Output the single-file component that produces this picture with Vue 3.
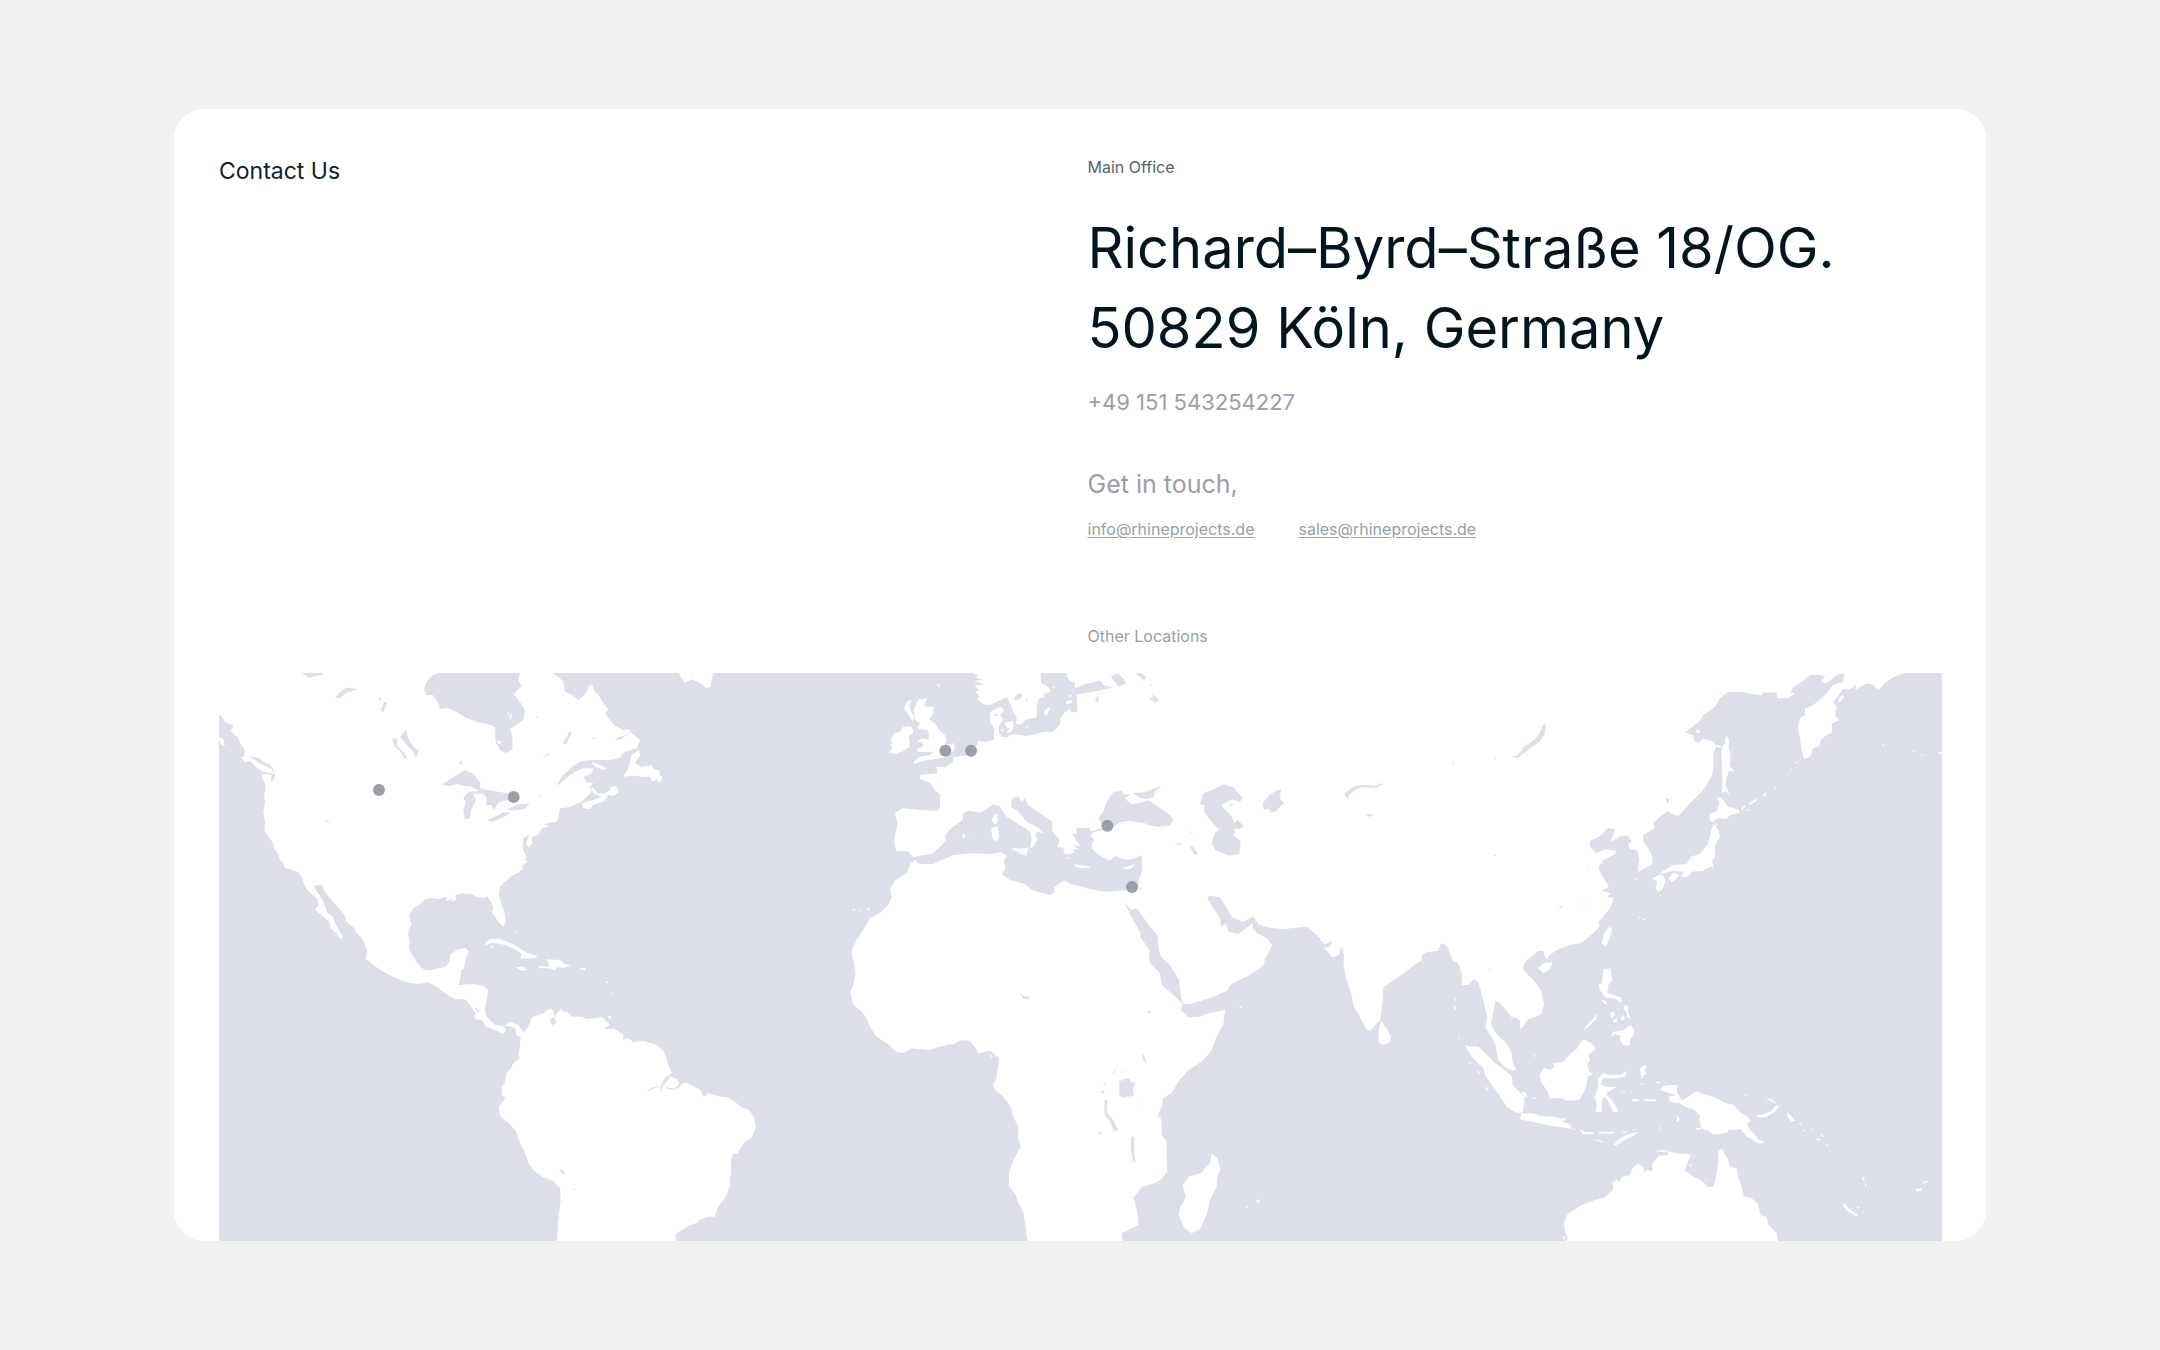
<script setup>
// Each region holds coastlines in its own local grid; x and y place it on the map.
const regions = [
  {
    id: 'north-america',
    x: -27,
    y: -39,
    land: [
      'M20 30V165L30 165 38 172 45 187 60 192 72 197 62 212 72 225 85 232 90 250 100 262 105 275 103 288 125 290 145 293 160 305 178 312 190 328 195 345 190 362 183 366 185 345 170 342 152 343 160 360 167 378 163 405 165 430 160 455 165 485 163 512 175 530 190 550 192 567 203 580 210 598 222 613 225 625 245 630 265 637 275 650 282 672 292 690 305 702 320 715 325 735 315 750 335 765 350 778 360 790 362 805 378 820 392 838 398 828 385 808 375 790 368 770 352 758 345 738 335 715 322 697 312 680 320 675 338 677 345 695 360 715 380 738 400 760 408 775 405 782 425 798 445 815 460 838 472 865 468 900H617L605 885 597 865 600 845 594 825 596 808 605 795 600 775 598 762 610 745 630 733 645 718 665 713 685 717 700 712 712 712 707 722 730 718 725 727 740 718 735 705 755 700 785 702 800 710 820 715 832 710 843 725 850 745 845 755 855 770 865 785 880 800 886 785 884 760 875 735 866 705 870 680 885 665 905 648 925 638 940 625 935 618 952 605 945 600 950 590 940 572 938 555 940 535 958 522 952 540 948 552 955 563 967 550 967 530 985 525 995 505 1020 498 1000 495 1020 488 1040 485 1045 470 1050 445 1075 442 1100 432 1115 425 1130 410 1145 395 1140 380 1150 370 1130 365 1120 352 1145 340 1150 325 1120 325 1095 335 1075 348 1060 362 1040 377 1055 350 1085 322 1115 303 1150 300 1200 300 1225 295 1245 275 1280 265 1290 240 1265 220 1255 207 1240 210 1215 197 1195 175 1185 160 1195 150 1180 130 1170 110 1152 92 1145 70 1135 85 1125 103 1105 120 1085 105 1065 95 1060 65 1045 50 1028 39V30H930V39L925 60 935 78 910 103 930 125 945 150 940 180 900 207 908 235 907 268 890 280 870 270 856 245 855 200 830 192 800 185 765 172 740 155 712 143 690 147 680 120 668 105 648 106 642 88 648 68 665 48 685 39V30Z',
    ],
    water: [
      'M273 39L300 53 335 45 340 39Z',
      'M375 112L395 92 410 83 445 87 410 98 388 115Z',
      'M504 115L515 115 511 124ZM522 125L532 128 520 157 512 150Z',
      'M547 238L560 232 563 262 580 275 591 295 584 298 572 275 555 260Z',
      'M570 232L587 209 597 240 611 260 626 272 617 295 610 275 593 257Z',
      'M745 310L755 302 760 315Z',
      'M695 374L735 348 765 330 790 342 812 370 810 382 825 388 855 394 893 400 897 420 880 422 865 430 850 452 845 435 828 435 830 412 815 400 790 403 798 420 783 450 780 475 765 478 760 450 768 425 760 415 775 396 808 393 785 380 765 378 740 372 720 378Z',
      'M832 480L860 467 880 457 905 458 880 472 845 487ZM890 448L920 435 958 430 945 448 905 452Z',
      'M345 476L360 490 350 487Z',
      'M1040 377L1060 350 1068 352 1050 370ZM998 291L1018 280 1012 288ZM1058 252L1078 215 1085 218 1068 252Z',
      'M1212 238L1262 220 1225 240ZM1147 232L1158 236 1150 238ZM985 407L995 408 988 411ZM976 168L988 172 980 173Z',
    ],
    islands: [
      'M93 292L105 306 120 303 135 318 150 330 170 338 192 342 185 328 160 315 145 308 130 295 105 288Z',
      'M27 230L42 240 44 258 30 252Z',
      'M1115 430L1120 445 1140 447 1150 435 1180 425 1195 405 1212 408 1225 397 1220 378 1205 380 1200 390 1180 402 1160 398 1150 382 1143 385 1150 400 1175 410 1150 420Z',
      'M1145 308L1165 312 1188 325 1185 330 1155 320Z',
      'M1240 350L1255 325 1265 285 1287 270 1291 285 1275 310 1295 320 1325 315 1330 327 1350 332 1348 345 1358 350 1350 368 1340 358 1328 365 1318 350 1298 350 1270 347Z',
      'M860 240L878 248 865 251ZM893 158L897 155 895 175ZM902 158L906 170 900 180Z',
      'M820 857L838 838 865 836 900 848 925 862 950 878 982 888 975 895 932 896 935 882 915 868 885 855 850 848ZM843 855L852 860 846 866ZM915 812L925 813 920 817Z',
      'M718 900L722 882 745 868 768 864 775 875 765 900Z',
    ],
  },
  {
    id: 'central-and-south-america',
    x: -27,
    y: 771,
    land: [
      'M432 0L455 25 472 60 468 85 490 105 520 125 555 143 590 157 625 162 655 157 680 170 705 190 735 207 765 208 780 225 797 250 795 268 815 270 830 290 855 300 880 312 888 298 880 290 895 288 915 295 918 315 932 322 930 345 925 375 930 383 910 400 903 415 888 432 885 460 875 470 875 497 888 503 865 530 870 558 895 578 918 603 930 640 950 680 955 700 975 725 1000 742 1030 753 1050 775 1052 810 1045 870 1040 940H1350V360L1325 342 1300 333 1270 337 1255 325 1240 330 1240 315 1215 297 1180 297 1200 285 1185 270 1175 262 1130 267 1115 260 1085 260 1070 245 1045 243 1035 260 1028 240 1020 235 1000 250 965 262 960 280 948 300 940 308 925 285 900 275 885 288 855 285 830 260 825 240 828 215 835 180 820 167 790 162 745 165 750 150 755 120 762 115 765 95 775 65 765 55 735 65 722 72 718 95 705 112 685 115 660 122 645 120 630 110 620 95 600 70 595 40 594 0Z',
    ],
    water: [
      'M1020 268L1033 260 1040 278 1030 287 1022 280Z',
      'M790 230L800 235 809 243 803 247Z',
      'M1048 718L1057 720 1068 732 1055 730ZM1090 776L1097 777 1094 782Z',
    ],
    islands: [
      'M985 108L1018 110 1015 97 1008 88 1050 90 1065 103 1083 107 1060 113 1040 112 1035 120 1015 115 988 115ZM918 112L940 110 953 119 935 123ZM1108 113L1128 114 1125 121 1110 120Z',
      'M1195 257L1203 258 1202 266 1195 264ZM1188 155H1194V159H1188ZM1192 171H1196V174H1192ZM1201 186H1205V190H1201ZM1050 236L1056 240 1050 243Z',
    ],
  },
  {
    id: 'europe',
    x: 1263,
    y: -39,
    land: [
      'M115 30V40L125 55 135 68 155 58 175 66 200 85 213 80 215 55 222 39V30Z',
      'M1000 30V42L1015 45 1008 52 1028 60 1003 62 1033 74 1005 76 1018 92 1006 93 1020 110 1012 117 1030 133 1050 135 1075 122 1100 112 1110 130 1120 155 1130 175 1128 193 1145 193 1155 180 1190 172 1190 140 1197 115 1212 112 1210 103 1230 95 1225 80 1203 70V30Z',
      'M1280 30V50L1290 65 1310 85 1350 68V30Z',
      'M1350 97L1310 100 1312 155 1290 145 1275 155 1262 175 1260 195 1240 215 1215 215 1160 228 1120 222 1100 232 1085 230 1075 215 1078 195 1090 180 1080 165 1092 152 1085 140 1060 150 1050 160 1050 185 1062 205 1062 240 1040 245 1015 243 1010 255 990 275 975 287 940 292 938 307 915 322 888 320 893 340 840 345 840 357 870 368 885 390 900 402 900 440 890 453 840 450 790 445 765 458 773 490 762 540 768 573 803 574 820 592 850 585 875 582 895 565 910 550 918 540 915 525 935 503 968 480 970 460 985 452 1020 458 1045 443 1060 433 1080 440 1100 470 1140 495 1170 515 1175 535 1170 565 1180 560 1192 540 1185 520 1195 515 1210 522 1195 503 1160 485 1135 455 1113 440 1117 415 1135 408 1145 425 1155 415 1165 435 1195 457 1237 485 1237 512 1255 535 1270 560 1275 582 1305 578 1300 503 1350 503Z',
      'M640 900L635 880 650 840 670 810 690 775 720 758 745 735 755 710 750 690 765 660 800 640 812 610 825 600 840 612 880 612 905 600 940 585 1000 580 1050 582 1085 577 1100 588 1090 605 1097 625 1085 642 1110 660 1150 670 1180 692 1232 706 1245 695 1242 683 1270 662 1305 672 1350 685V900Z',
    ],
    water: [
      'M1122 115L1130 105 1138 98 1148 104 1143 115 1125 122ZM1157 122L1163 115 1160 130Z',
      'M1055 165L1075 160 1072 168Z',
    ],
    islands: [
      'M821 150L835 118 862 115 852 138 882 142 878 165 868 178 885 190 895 208 915 225 920 240 915 255 943 250 944 268 930 282 918 292 885 297 850 302 822 312 820 305 840 290 870 285 880 275 835 276 830 268 850 258 848 248 833 245 845 235 865 238 868 225 862 210 838 208 832 202 840 190 825 180Z',
      'M747 278L758 262 750 255 760 248 750 240 765 220 780 215 790 200 812 198 822 215 806 228 810 260 790 272 765 283Z',
      'M793 148L800 125 815 118 808 135 812 152 822 170 818 185 806 165Z',
      'M892 75L897 70 899 84Z',
      'M1092 188L1118 182 1122 195 1115 215 1100 218 1110 205 1100 203ZM1080 207L1092 210 1088 215ZM1157 198L1167 202 1160 205Z',
      'M1213 155L1225 140 1230 145 1222 163 1215 165ZM1278 123L1298 120 1295 130 1280 132ZM1285 107L1296 105 1292 113ZM1236 80L1246 79 1243 85Z',
      'M1062 465L1070 460 1073 480 1067 495 1055 482ZM1054 505L1072 498 1077 515 1075 540 1063 543 1056 530Z',
      'M1118 563L1140 566 1165 562 1160 587 1145 582 1120 570ZM966 520L978 527 970 536ZM996 521L1001 521 999 525ZM935 534L940 534 937 538Z',
      'M1237 490L1240 515 1258 540 1252 560 1270 565 1275 583 1290 582 1303 578 1303 568 1318 570 1298 553 1322 560 1308 540 1296 522 1312 520 1306 505 1290 495Z',
      'M1303 613L1345 618 1350 623 1325 625 1303 618ZM1283 592H1288V596H1283Z',
      'M637 749L646 746 642 754ZM657 752L662 752 660 758ZM681 750L690 740 686 752Z',
    ],
  },
  {
    id: 'atlantic',
    x: 1263,
    y: 771,
    land: [
      'M-30 940H107V912L145 887 175 877 175 870 205 860 225 860 232 835 260 795 270 765 270 740 274 730 272 690 280 672 292 672 310 640 335 622 347 595 342 560 325 538 305 533 285 515 260 502 240 500 205 490 190 500 180 480 150 462 130 458 115 475 100 480 80 476 84 460 102 443 82 438 95 430 85 405 78 380 70 362 45 343 10 333 -30 338Z',
      'M668 0L635 60 642 80 642 100 647 130 640 165 630 185 640 225 665 245 680 265 690 290 710 320 740 340 770 365 790 370 815 355 865 360 900 350 930 343 940 343 965 330 990 333 1005 352 1015 370 1050 362 1077 385 1070 440 1060 465 1065 480 1090 500 1112 530 1120 560 1135 590 1133 625 1142 650 1120 690 1107 730 1107 768 1127 795 1133 815 1150 845 1155 880 1163 940H1350V0Z',
    ],
    water: [
      'M60 470L78 438 90 443 75 460 66 470 65 487ZM20 486L35 473 62 467 38 477Z',
      'M1140 190L1152 199 1170 202 1168 206 1150 206Z',
      'M920 338L932 345 930 350Z',
    ],
    islands: ['M80 460L96 445 112 448 118 462 103 476 84 473Z', 'M1050 378L1055 374 1057 383Z'],
  },
  {
    id: 'middle-east',
    x: 2553,
    y: -39,
    land: [],
    water: [
      'M-5 60L14 68 15 85 45 72 90 62 100 75 130 83 95 90 60 97 20 103 22 155 5 157 -2 145V100Z',
      'M122 50L140 40 160 55 169 70 145 80ZM197 40L215 39 228 50 222 62ZM75 118L82 108 88 120 82 128ZM237 115L250 112 246 102 268 120 257 128ZM236 73L246 74 243 78Z',
      'M-10 503L20 512 20 503 58 503 62 515 78 510 98 505 95 512 72 515 62 524 72 540 65 555 75 575 95 590 120 602 135 588 170 600 195 595 215 585 217 630 207 660 203 690 170 690 110 695 70 690 35 680 -5 670Z',
      'M85 475L100 455 110 425 130 397 155 392 160 403 185 402 163 413 182 432 205 430 235 420 265 440 300 465 310 480 300 497 265 500 235 496 225 490 180 482 150 487 130 500 100 500Z',
      'M187 399L225 397 277 376 255 395 250 412 230 417 205 412Z',
      'M390 433L400 400 430 388 462 373 490 382 518 415 510 425 485 418 455 435 465 450 485 468 492 490 503 480 522 498 508 507 492 505 495 520 490 525 512 543 508 583 478 587 435 570 425 548 435 518 447 510 420 480 403 455 403 435ZM470 435L495 433 485 438Z',
      'M578 430L600 403 620 392 636 388 630 400 632 420 642 430 625 445 615 455 600 457 598 445 582 450Z',
      'M822 402L850 380 880 374 920 378 936 368 938 374 920 383 875 382 850 393 836 405 834 419ZM883 466L912 461 900 470ZM1146 306H1153V310H1146ZM1273 290H1277V300H1273ZM1270 584L1280 586 1275 589Z',
      'M313 552L335 546 330 555ZM358 556L370 562 383 580 374 586ZM361 515H369V518H361ZM210 682H215V688H210Z',
      'M412 715L418 707 450 712 470 745 490 775 520 785 550 770 568 795 600 803 640 807 712 800 750 835 752 848 770 852 790 844 775 862 762 862 785 890 800 893 812 880 813 858 822 885 820 903H582L607 855 595 838 560 818 550 808 548 790 530 803 505 822 475 815 467 790 453 802 450 775 430 745Z',
      'M162 726L185 750 200 745 240 800 262 825 265 870 280 903H240L238 865 212 835 210 815 185 772Z',
      'M1055 903V885L1070 877 1105 872 1115 850 1135 865 1147 903Z',
    ],
    islands: [
      'M157 622L180 617 197 610 185 625 165 629ZM10 613L30 617 58 618 55 625 25 624ZM62 560L70 563 68 570Z',
    ],
  },
  {
    id: 'indian-ocean',
    x: 2553,
    y: 771,
    land: [],
    water: [
      'M555 0L590 25 607 45 595 75 578 108 550 128 520 145 487 160 470 182 430 200 385 215 360 222 340 222 333 200 327 150 300 105 268 75 262 20 240 0H210L215 25 238 60 240 100 270 130 275 165 310 195 338 222 333 240 355 262 390 260 420 248 465 240 460 285 440 320 425 360 400 390 350 425 325 455 305 488 280 505 275 530 263 557 275 575 275 615 290 635 290 690 292 725 265 755 215 772 190 803 203 850 205 885 155 910 160 940H1350V270L1325 265 1290 220 1275 213 1270 250 1262 280 1275 310H1265L1248 295 1252 260 1240 210 1225 155 1210 148 1195 165 1175 165 1175 130 1162 95 1150 95 1135 60 1130 45 1113 40 1105 62 1070 70 1055 90 1020 115 980 145 940 172 938 215 930 270 920 280 900 303 890 300 875 270 850 225 845 195 828 145 820 100 822 75 812 50 808 75 785 82 762 55 790 33 765 42 750 30 735 12 718 0Z',
      'M148 450L160 452 162 446 178 445 182 455 197 460 188 475 192 497 183 497 181 507 178 499 160 503 148 498Z',
      'M103 510L112 512 112 550 130 570 145 602 133 603 120 575 104 555ZM183 618L193 622 192 670 197 695 190 696 182 660ZM127 428L140 416 132 429ZM100 465L110 455 105 467ZM95 482L104 480 102 490 96 490ZM216 373L223 377 230 404 219 390ZM82 610L95 603 90 613ZM230 244H243L238 251ZM155 422L162 424 157 427ZM163 585L173 588ZM196 520L202 521 198 524ZM1257 116H1265V119H1257Z',
    ],
    islands: [
      'M1262 268L1262 283 1275 310 1310 340 1325 370 1328 400 1337 418 1328 423 1310 412 1285 390 1275 340 1265 320 1246 293 1252 262Z',
      'M933 272L950 295 963 320 958 338 940 345 927 338 925 310Z',
      'M425 670L442 685 452 720 443 735 440 770 420 810 410 855 390 897 365 910 343 895 326 855 330 835 348 800 338 765 355 740 395 728 408 712 420 700Z',
      'M505 229H518L512 234ZM525 828L534 827 532 835ZM558 812L565 807 570 817 560 817ZM267 557L274 562 270 568Z',
      'M1184 345L1205 350 1225 350 1245 368 1275 400 1300 418 1322 435 1328 465 1345 485 1362 500 1363 520 1358 548 1340 548 1310 530 1290 498 1270 470 1248 440 1240 415 1205 380Z',
      'M1218 420L1230 428 1226 432ZM1244 468L1254 476 1250 483ZM1264 495L1268 498 1264 501ZM1198 398H1203V402H1198ZM1154 207H1158V212H1154ZM1153 228H1157V240H1153ZM1164 322H1168V326H1164Z',
    ],
  },
  {
    id: 'east-asia',
    x: 3843,
    y: -39,
    land: [],
    water: [
      'M1330 30V39H1215L1180 52 1155 68 1135 90 1120 75 1100 70 1065 90 1068 75 1050 88 1028 88 1000 125 1010 140 1005 165 1018 182 995 190 997 218 980 225 962 240 958 258 940 265 930 290 912 298 905 270 900 235 893 200 900 175 915 165 915 145 940 135 975 105 1000 75 1030 65 1033 39 1010 45 990 62 975 70 965 62 975 50 960 44 930 45 905 65 880 80 872 98 885 100 865 115 830 115 832 98 790 97 785 105 740 100 730 95 685 95 660 115 645 140 610 165 600 182 555 218 580 225 583 243 595 248 610 235 635 243 650 258 640 280 640 320 635 350 605 395 570 430 535 468 515 462 503 453 480 470 460 490 463 505 430 525 430 545 445 565 457 590 457 612 435 625 413 637 418 600 412 572 390 567 385 550 395 545 385 527 365 527 332 545 345 508 325 503 300 528 270 543 270 560 288 580 315 568 348 573 345 582 310 600 295 625 310 655 327 680 305 692 332 700 320 710 342 715 330 745 305 775 295 785 298 800 280 820 245 850 205 857 170 870 145 888 148 898 135 895 130 875 115 873 82 903H1330Z',
      'M33 287L50 288 72 262 100 241 118 222 130 193 137 194 135 222 118 246 98 260 78 274 52 295ZM498 413L508 418 505 430 500 430ZM175 738L187 738 183 745ZM247 730L257 731 252 735ZM260 625H264V628H260Z',
    ],
    islands: [
      'M675 235L682 226 687 240 686 265 692 285 690 318 705 335 688 332 680 350 677 375 688 403 673 392 665 402 667 370 666 320 664 275 668 258 676 250Z',
      'M652 410L662 412 685 440 718 450 718 458 690 465 680 478 650 475 638 488 628 480 630 462 650 455 658 430Z',
      'M640 492L655 508 660 530 645 555 645 590 637 600 640 622 628 620 610 633 575 635 560 652 545 650 548 635 520 632 480 642 490 632 520 615 560 612 572 590 600 582 625 550 630 525ZM645 490L653 494 648 498Z',
      'M458 655L480 643 498 658 487 690 475 695 466 685 472 665ZM505 655L520 638 540 645 530 655 515 667Z',
      'M305 850L312 822 328 800 337 808 330 832 318 858ZM403 655L414 653 408 659Z',
      'M722 448L735 435 737 438 726 450ZM745 432L770 415 775 412 768 424 748 434ZM787 408L800 397 796 408ZM820 385L830 376 826 386ZM883 310L897 303 892 310ZM741 448H746V452H741ZM872 326H876V329H872ZM862 340H866V343H862Z',
      'M1014 120L1025 105 1032 108 1020 128ZM587 210L598 209 600 218 590 220ZM650 255L664 258 660 263 650 262Z',
      'M1144 252L1153 254 1150 258ZM1239 272H1244V276H1239ZM1264 283L1272 285 1266 288ZM1316 276H1325V281H1316ZM416 771H422V775H416ZM428 776H436V779H428ZM479 706H483V709H479Z',
    ],
  },
  {
    id: 'oceania',
    x: 3843,
    y: 771,
    land: [],
    water: [
      'M1330 0H290L245 40 205 45 190 58 160 68 142 88 135 82 130 63 110 67 75 95 68 118 85 135 105 155 125 185 132 225 125 250 105 262 85 268 70 290 58 298 55 265 35 262 10 230 0 225V940H1330Z',
    ],
    islands: [
      'M-20 300L0 323 22 345 35 370 36 395 47 416 40 424 20 415 0 395Z',
      'M0 410L15 425 35 437 38 465 55 482 72 500 73 515 68 545 45 545 20 528 0 500Z',
      'M305 40L312 12 328 -10 337 0 328 22 318 48ZM115 115L130 100 158 97 150 118 130 130Z',
      'M60 568L65 550 100 550 122 558 165 560 185 566 202 565 187 575 208 582 215 597 180 592 140 585 110 578Z',
      'M63 485L75 485 82 500 72 500ZM95 502L108 502 104 507ZM103 375H107V380H103Z',
      'M118 435L133 413 150 420 162 412 160 400 190 395 210 373 232 355 240 340 250 328 268 335 287 355 265 375 270 390 262 402 268 425 280 432 263 440 258 470 250 488 238 510 200 512 185 505 150 505 140 480 125 460Z',
      'M287 547L290 520 282 500 293 480 295 445 308 430 330 435 360 435 382 422 375 438 355 445 308 445 302 465 330 472 350 470 325 485 318 492 340 515 355 545 340 547 322 510 312 500 305 515 305 545Z',
      'M310 118L333 115 333 135 338 150 325 165 322 190 345 195 365 205 362 218 345 205 318 203 300 180 295 165 305 160Z',
      'M303 210L318 212 322 225 312 220ZM250 300L268 278 288 255 292 252 288 268 265 290ZM328 250L340 243 345 255 335 265ZM338 275L350 262 352 258 350 278ZM362 265L370 255 375 268 365 272ZM372 225L385 228 384 245 390 265 380 262 380 248 372 238ZM350 235L360 238 355 240Z',
      'M330 322L340 305 362 302 375 298 392 285 403 300 402 315 392 325 388 348 370 345 360 330 362 318 345 312Z',
      'M420 415L428 408 436 405 440 412 432 420 440 432 430 435 430 447 425 445 422 430ZM420 462L428 459 432 464ZM465 455L482 456 480 460 468 460Z',
      'M395 508L418 508 415 514 400 514ZM430 507L472 509 468 513 432 512ZM355 484L378 485 372 487ZM388 483L400 482 395 486Z',
      'M480 480L490 468 512 465 530 465 532 490 545 512 560 503 588 483 610 493 640 500 675 518 700 525 718 545 740 558 753 572 740 580 750 600 775 628 795 640 775 640 740 620 722 597 700 600 685 598 682 608 640 614 625 602 605 595 590 602 588 595 605 592 598 575 600 555 580 538 555 530 540 520 510 515 505 500 528 495 505 488Z',
      'M768 557L795 552 815 542 828 525 835 530 825 545 800 560 780 563ZM795 502L815 508 830 522 822 518 805 508ZM732 492L743 494 735 497ZM862 545L870 555 885 572 875 575 862 560ZM895 577L906 584 900 586ZM908 598L915 602 911 606ZM928 590L943 602 935 600ZM945 626L963 628 958 632ZM962 608L972 620 966 620ZM975 640L988 648 978 646Z',
      'M215 595L228 597 222 600ZM238 598L255 606 282 607 278 613 250 612ZM295 605L345 606 340 611 300 611ZM285 627L312 635 305 637 290 632ZM340 645L360 625 385 612 415 606 400 618 375 630 350 645ZM365 605H378V608H365ZM395 598L410 597 405 601ZM475 597L485 587 480 597ZM530 555L540 565 535 575 530 577Z',
      'M195 940L203 925 195 905 192 880 203 852 245 825 280 812 318 800 338 780 340 755 350 748 358 757 365 742 390 735 400 710 415 702 430 712 433 728 440 720 458 722 455 705 475 678 505 675 500 663 530 670 560 672 575 675 565 690 555 722 580 740 605 752 625 772 640 770 650 730 655 695 655 665 665 655 685 690 690 712 710 715 715 745 725 770 730 798 755 805 772 820 782 855 800 862 805 885 830 908 835 940Z',
      'M465 665L485 660 508 662 490 665ZM568 702L577 705 572 710ZM615 748L622 752 618 756ZM188 918L195 922 193 932Z',
      'M1085 740L1095 745 1092 754ZM1094 760L1102 768 1096 770ZM1028 817L1045 835 1075 855 1068 858 1045 845 1030 828ZM1071 830H1077V835H1071ZM1087 845H1091V849H1087ZM1246 778L1262 774 1267 780 1250 785ZM1265 760L1288 750 1278 760Z',
    ],
  },
]

const layers = ['land', 'water', 'islands']

const offices = [
  { name: 'Western United States', x: 480, y: 351 },
  { name: 'Toronto', x: 884, y: 372 },
  { name: 'London', x: 2179, y: 233 },
  { name: 'Amsterdam', x: 2256, y: 233 },
  { name: 'Istanbul', x: 2665, y: 458 },
  { name: 'Tel Aviv', x: 2739, y: 642 },
]

const emails = ['info@rhineprojects.de', 'sales@rhineprojects.de']
</script>

<template>
  <main class="page">
    <section class="card">
      <div class="details">
        <h1 class="title">Contact Us</h1>
        <div class="office">
          <h2 class="label label-strong">Main Office</h2>
          <address class="address">Richard–Byrd–Straße 18/OG.<br />50829 Köln, Germany</address>
          <a class="phone" href="tel:+49151543254227">+49 151 543254227</a>
          <p class="touch">Get in touch,</p>
          <div class="emails">
            <a v-for="email in emails" :key="email" class="email" :href="'mailto:' + email">{{ email }}</a>
          </div>
          <h2 class="label">Other Locations</h2>
        </div>
      </div>
      <svg class="map" viewBox="0 0 5169 1704" role="img" aria-label="World map of office locations">
        <rect class="water" width="5169" height="1704" />
        <rect class="land" x="2553" width="2616" height="1704" />
        <g v-for="layer in layers" :key="layer" :class="layer">
          <g v-for="region in regions" :key="region.id" :transform="`translate(${region.x} ${region.y})`">
            <path v-for="d in region[layer]" :key="d" :d="d" />
          </g>
        </g>
        <circle v-for="office in offices" :key="office.name" class="pin" :cx="office.x" :cy="office.y" r="18" />
      </svg>
    </section>
  </main>
</template>

<style>
body {
  margin: 0;
  background: #f1f1f1;
}
</style>

<style scoped>
.page {
  padding: 109px 174px;
  font-family: Inter, "Liberation Sans", sans-serif;
  color: #9a9ea6;
}

.card {
  overflow: hidden;
  padding: 46px 44px 0 45px;
  border-radius: 30px;
  background: #fff;
}

.details {
  display: grid;
  grid-template-columns: 1fr 1fr;
  column-gap: 14px;
  margin-bottom: 25px;
}

.title {
  margin: 0;
  font-size: 23px;
  font-weight: 400;
  line-height: 32px;
  color: #0d232d;
}

.office {
  display: flex;
  flex-direction: column;
  align-items: flex-start;
}

.label {
  margin: 0;
  font-size: 16px;
  font-weight: 400;
  line-height: 24px;
}

.label-strong {
  color: #55636b;
}

.address {
  margin: 29px 0 18px;
  font-size: 56px;
  font-style: normal;
  line-height: 80px;
  color: #03161f;
  white-space: nowrap;
}

.phone {
  font-size: 22px;
  line-height: 32px;
  color: inherit;
  text-decoration: none;
}

.touch {
  margin: 50px 0 17px;
  font-size: 25px;
  line-height: 32px;
}

.emails {
  display: flex;
  gap: 44px;
  margin-bottom: 83px;
}

.email {
  font-size: 16px;
  line-height: 24px;
  color: inherit;
  text-decoration: underline;
  text-underline-offset: 2px;
}

.map {
  display: block;
  width: 100%;
}

.land,
.islands {
  fill: #fff;
}

.water {
  fill: #dddfe8;
}

.pin {
  fill: #9aa0a7;
}
</style>
